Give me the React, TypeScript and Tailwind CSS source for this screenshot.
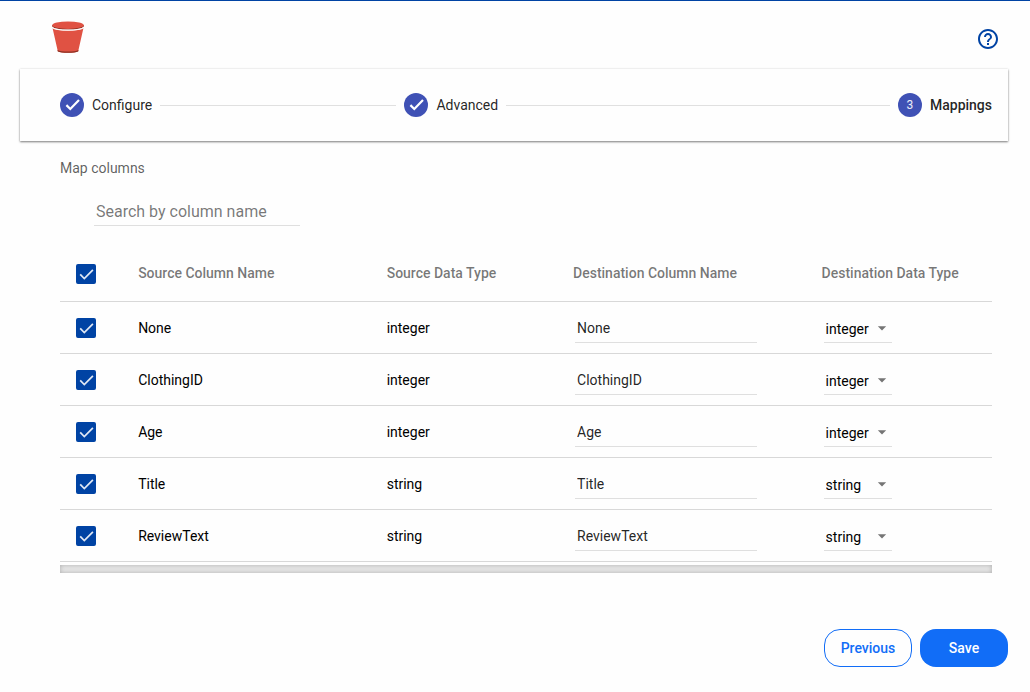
import React, { useState } from "react";
import { MdArrowDropDown, MdHelpOutline } from "react-icons/md";

interface ColumnMapping {
  source: string;
  sourceType: string;
  destination: string;
  destinationType: string;
  selected: boolean;
}

const DATA_TYPES = ["integer", "string", "float", "boolean", "date"];

const createMapping = (name: string, type: string): ColumnMapping => ({
  source: name,
  sourceType: type,
  destination: name,
  destinationType: type,
  selected: true,
});

const INITIAL_MAPPINGS: ColumnMapping[] = [
  createMapping("None", "integer"),
  createMapping("ClothingID", "integer"),
  createMapping("Age", "integer"),
  createMapping("Title", "string"),
  createMapping("ReviewText", "string"),
];

const BucketLogo: React.FC = () => (
  <svg viewBox="0 0 32 32" className="size-8" aria-hidden="true">
    <path
      d="M0.6 7.2C4 10.4 28 10.4 31.4 7.2L26.2 30.2C23 32.2 9 32.2 5.8 30.2Z"
      fill="#e05243"
    />
    <path
      d="M5.5 29C9 31 23 31 26.5 29L26.2 30.4C23 32.3 9 32.3 5.8 30.4Z"
      fill="#8c3123"
    />
    <path
      d="M0.2 4V5.4C3 9.6 29 9.6 31.8 5.4V4Z"
      fill="#8c3123"
    />
    <ellipse cx="16" cy="4.2" rx="15.8" ry="3.7" fill="#e05243" />
    <path
      d="M0.4 6.4C3 10.2 29 10.2 31.6 6.4"
      fill="none"
      stroke="#fefefe"
      strokeWidth="0.9"
    />
  </svg>
);

interface StepProps {
  index: number;
  label: string;
  done?: boolean;
}

const Step: React.FC<StepProps> = ({ index, label, done = false }) => (
  <li
    className="flex items-center gap-2"
    aria-current={done ? undefined : "step"}
  >
    <span className="flex size-6 items-center justify-center rounded-full bg-[#3f51b5] text-xs text-white/90">
      {done ? (
        <svg
          viewBox="0 0 24 24"
          className="size-6"
          fill="none"
          stroke="#fff"
          strokeWidth="2.2"
          aria-hidden="true"
        >
          <path d="M6.4 12.1 10.3 16 19 7.1" />
        </svg>
      ) : (
        index
      )}
    </span>
    <span
      className={
        done ? "text-sm text-black/87" : "text-sm font-medium text-black/87"
      }
    >
      {label}
    </span>
  </li>
);

interface CheckboxProps {
  label: string;
  checked: boolean;
  onChange: (checked: boolean) => void;
}

const Checkbox: React.FC<CheckboxProps> = ({ label, checked, onChange }) => (
  <span className="relative block size-5">
    <input
      type="checkbox"
      aria-label={label}
      checked={checked}
      onChange={(e) => onChange(e.target.checked)}
      className="block size-5 appearance-none rounded-xs border-2 border-black/54 checked:border-[#0043a4] checked:bg-[#0043a4]"
    />
    {checked && (
      <svg
        viewBox="0 0 20 20"
        className="pointer-events-none absolute inset-0 size-5"
        fill="none"
        stroke="#e0e8f4"
        strokeWidth="1.7"
      >
        <path d="M4.2 10.4 8.3 14.6 16.9 5.8" />
      </svg>
    )}
  </span>
);

const App: React.FC = () => {
  const [mappings, setMappings] = useState(INITIAL_MAPPINGS);
  const [search, setSearch] = useState("");

  const update = (source: string, changes: Partial<ColumnMapping>) =>
    setMappings((prev) =>
      prev.map((m) => (m.source === source ? { ...m, ...changes } : m))
    );

  const visible = mappings.filter((m) =>
    m.source.toLowerCase().includes(search.toLowerCase())
  );
  const allSelected = mappings.every((m) => m.selected);

  return (
    <div className="min-h-screen border-t border-[#0043a4] bg-[#fefefe] pr-[22px] pl-5 font-[Roboto,sans-serif] text-black">
      <header className="flex items-center justify-between pt-5 pr-2 pb-4 pl-8">
        <BucketLogo />
        <button type="button" aria-label="Help" className="mt-1 text-[#0043a4]">
          <MdHelpOutline className="size-6" />
        </button>
      </header>

      <ol className="flex h-[72px] items-center gap-2 pr-4 pl-10 shadow-[0_1px_2px_rgba(0,0,0,0.5),0_0_2px_rgba(0,0,0,0.08)]">
        <Step index={1} label="Configure" done />
        <li className="h-px grow-[8] bg-[#e0e0e0]" aria-hidden="true" />
        <Step index={2} label="Advanced" done />
        <li className="h-px grow-[13] bg-[#e0e0e0]" aria-hidden="true" />
        <Step index={3} label="Mappings" />
      </ol>

      <main className="pt-[17px] pr-4 pl-10">
        <h1 className="text-sm text-black/64">Map columns</h1>

        <input
          type="text"
          aria-label="Search by column name"
          placeholder="Search by column name"
          value={search}
          onChange={(e) => setSearch(e.target.value)}
          className="mt-[19px] ml-[34px] block h-[29px] w-[206px] border-b border-black/12 px-0.5 text-base outline-none placeholder:text-black/54"
        />

        <div className="mt-[19px] overflow-x-auto">
          <table className="w-full table-fixed border-collapse text-left text-sm">
            <thead>
              <tr className="h-14 border-b border-black/15 text-black/54">
                <th className="w-1/15 pt-0.5 pl-4">
                  <Checkbox
                    label="Select all columns"
                    checked={allSelected}
                    onChange={(selected) =>
                      setMappings((prev) =>
                        prev.map((m) => ({ ...m, selected }))
                      )
                    }
                  />
                </th>
                <th className="w-4/15 pl-4 font-medium">Source Column Name</th>
                <th className="w-1/5 pl-4 font-medium">Source Data Type</th>
                <th className="w-4/15 pl-4 font-medium">
                  Destination Column Name
                </th>
                <th className="w-1/5 pl-4 font-medium">
                  Destination Data Type
                </th>
              </tr>
            </thead>
            <tbody>
              {visible.map((m) => (
                <tr key={m.source} className="h-13 border-b border-black/15">
                  <td className="pt-0.5 pl-4">
                    <Checkbox
                      label={`Select ${m.source}`}
                      checked={m.selected}
                      onChange={(selected) => update(m.source, { selected })}
                    />
                  </td>
                  <td className="pt-0.5 pl-4">{m.source}</td>
                  <td className="pt-0.5 pl-4">{m.sourceType}</td>
                  <td className="pt-0.5 pl-[18px]">
                    <input
                      type="text"
                      aria-label={`Destination name for ${m.source}`}
                      value={m.destination}
                      onChange={(e) =>
                        update(m.source, { destination: e.target.value })
                      }
                      className="block h-[30px] w-[182px] border-b border-black/12 px-0.5 text-black/87 outline-none"
                    />
                  </td>
                  <td className="pt-0.5 pl-[18px]">
                    <div className="relative w-[68px]">
                      <select
                        aria-label={`Destination type for ${m.source}`}
                        value={m.destinationType}
                        onChange={(e) =>
                          update(m.source, { destinationType: e.target.value })
                        }
                        className="block h-[30px] w-full appearance-none border-b border-black/12 px-0.5 pt-0.5 text-black outline-none"
                      >
                        {DATA_TYPES.map((type) => (
                          <option key={type}>{type}</option>
                        ))}
                      </select>
                      <MdArrowDropDown className="pointer-events-none absolute top-[5px] right-0 size-5 text-black/54" />
                    </div>
                  </td>
                </tr>
              ))}
            </tbody>
          </table>
        </div>
        <div className="mt-[3px] h-2 bg-[#e8e8e8] shadow-[inset_0_0_5px_rgba(0,0,0,0.25)]" />
      </main>

      <footer className="flex justify-end gap-2 pt-14 pb-6 text-sm font-medium">
        <button
          type="button"
          className="h-[38px] w-[88px] rounded-2xl border border-[#116df7] text-[#116df7]"
        >
          Previous
        </button>
        <button
          type="button"
          className="h-[38px] w-[88px] rounded-2xl bg-[#116df7] text-white"
        >
          Save
        </button>
      </footer>
    </div>
  );
};

export default App;
